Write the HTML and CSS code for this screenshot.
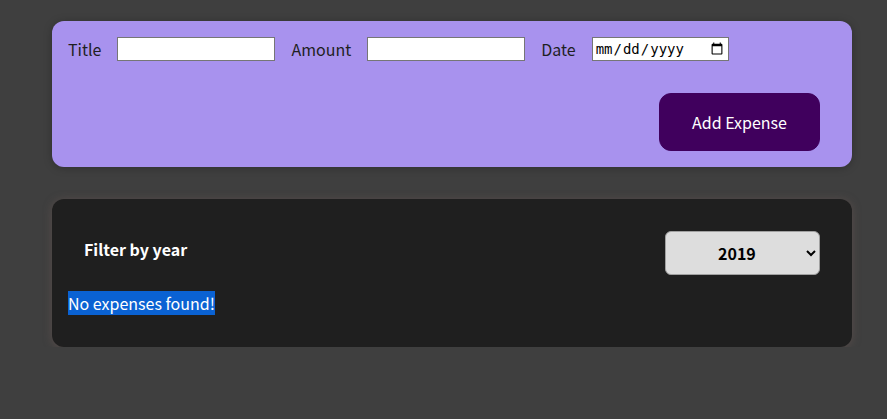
FILE: index.html
```
<!DOCTYPE html>
<html lang="en">
<head>
<meta charset="utf-8">
<title>Expenses</title>
<link rel="stylesheet" href="styles.css">
</head>
<body>
<div class="app">
  <section class="new-expense">
    <form class="expense-form">
      <div class="controls">
        <label class="control-label" for="title">Title</label>
        <input class="text-input" id="title" type="text">
        <label class="control-label" for="amount">Amount</label>
        <input class="text-input" id="amount" type="number">
        <label class="control-label" for="date">Date</label>
        <input class="date-input" id="date" type="date">
      </div>
      <div class="actions">
        <button class="add-btn" type="button">Add Expense</button>
      </div>
    </form>
  </section>
  <section class="expenses">
    <div class="filter">
      <label class="filter-label">Filter by year</label>
      <select class="filter-select">
        <option>2019</option>
        <option>2020</option>
        <option>2021</option>
        <option>2022</option>
      </select>
    </div>
    <p class="fallback"><span class="selected">No expenses found!</span></p>
  </section>
</div>
</body>
</html>
```
FILE: styles.css
```
html, body {
  margin: 0;
  padding: 0;
}
body {
  background: #3f3f3f;
  font-family: "Noto Sans CJK JP", "Noto Sans", sans-serif;
  font-size: 16px;
}
.app {
  padding: 21px 0 0 52px;
}
.new-expense {
  width: 800px;
  box-sizing: border-box;
  background: #a892ee;
  border-radius: 12px;
  padding: 16px;
  box-shadow: 0 1px 8px rgba(0, 0, 0, 0.25);
}
.controls {
  display: flex;
  align-items: center;
  gap: 16px;
  height: 24px;
}
.control-label {
  color: #1f1f1f;
  line-height: 24px;
}
.text-input {
  width: 158px;
  height: 24px;
  box-sizing: border-box;
  margin: 0;
  border: 1px solid #767676;
  background: #fff;
}
.date-input {
  width: 137px;
  height: 24px;
  box-sizing: border-box;
  margin: 0;
  border: 1px solid #767676;
  background: #fff;
  font-family: "DejaVu Sans Mono", monospace;
  font-size: 14px;
  padding: 1px 2px;
}
.actions {
  display: flex;
  justify-content: flex-end;
  margin-top: 32px;
  padding-right: 16px;
}
.add-btn {
  font-family: inherit;
  font-size: 16px;
  line-height: 24px;
  height: 58px;
  width: 161px;
  padding: 0;
  color: #fff;
  background: #40005d;
  border: 1px solid #40005d;
  border-radius: 12px;
}
.expenses {
  width: 800px;
  box-sizing: border-box;
  margin-top: 32px;
  background: #1f1f1f;
  border-radius: 12px;
  padding: 16px;
  box-shadow: 0 1px 8px rgba(110, 90, 85, 0.55);
}
.filter {
  display: flex;
  align-items: center;
  justify-content: space-between;
  padding: 0 16px;
  margin: 16px 0;
}
.filter-label {
  color: #fff;
  font-weight: bold;
  font-size: 16px;
  line-height: 24px;
  margin-bottom: 8px;
}
.filter-select {
  width: 155px;
  height: 44px;
  font-family: inherit;
  font-size: 16px;
  font-weight: bold;
  padding: 0 8px 0 48px;
  border-radius: 6px;
  border: 1px solid #a0a0a0;
  background-color: #ddd;
  color: #000;
}
.fallback {
  margin: 16px 0;
  color: #fff;
  line-height: 24px;
}
.selected {
  background: #0a62d3;
}
```
